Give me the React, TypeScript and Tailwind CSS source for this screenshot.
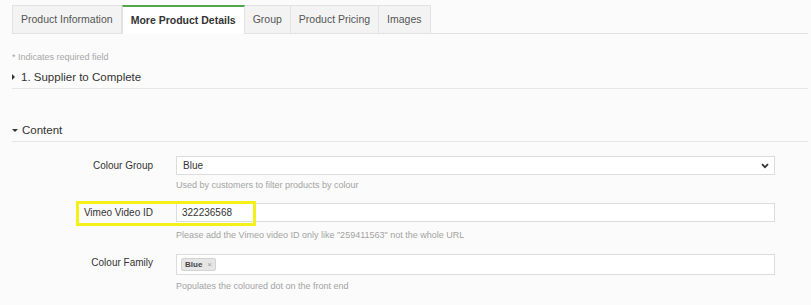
import { ReactNode } from 'react';

const tabs = ['Product Information', 'More Product Details', 'Group', 'Product Pricing', 'Images'];

function Field({ label, children, help, labelClass = '' }: { label: string; children: ReactNode; help: string; labelClass?: string }) {
  return (
    <div className="flex">
      <div className={`w-[141px] shrink-0 text-right text-[10px] text-[#333] ${labelClass}`}>{label}</div>
      <div className="ml-[23px] w-[599px]">
        {children}
        <p className="text-[9px] leading-[11px] text-[#a3a3a3]">{help}</p>
      </div>
    </div>
  );
}

export default function App() {
  return (
    <div className="min-h-screen bg-[#fbfbfb] pt-[5px] pl-3 pr-[3px] font-['Liberation_Sans',Arial,sans-serif]">
      {/* tab strip */}
      <div className="flex h-[29px] border-b border-[#e2e2e2]">
        {tabs.map((t, i) =>
          i === 1 ? (
            <div key={t} className="-mb-px flex items-center border-x border-t-2 border-x-[#e2e2e2] border-t-[#4fa64f] bg-white px-2 text-[10.5px] font-bold text-[#333]">
              {t}
            </div>
          ) : (
            <div key={t} className="flex items-center border-r border-t border-[#e2e2e2] bg-[#f3f3f3] px-2 text-[10.5px] text-[#555] first:border-l">
              {t}
            </div>
          )
        )}
      </div>

      <p className="mt-[18px] text-[9px] leading-[11px] text-[#a8a8a8]">* Indicates required field</p>

      <div className="mt-[7px] flex items-center border-b border-[#e6e6e6] pb-1 text-[11.5px] leading-[14px] text-[#333]">
        <span className="mr-[6px] inline-block h-0 w-0 border-y-[3px] border-l-[3px] border-y-transparent border-l-[#333]" />
        <span>1. Supplier to Complete</span>
      </div>

      <div className="mt-[34px] flex items-center border-b border-[#e6e6e6] pb-1 text-[11.5px] leading-[14px] text-[#333]">
        <span className="mr-[4px] inline-block h-0 w-0 border-x-[3px] border-t-[3px] border-x-transparent border-t-[#333]" />
        <span>Content</span>
      </div>

      <div className="mt-[14px]">
        <Field label="Colour Group" help="Used by customers to filter products by colour" labelClass="leading-[19px]">
          <div className="mb-[5px] flex h-[19px] items-center justify-between border border-[#dcdcdc] bg-white pl-[6px] pr-[5px] text-[10px] text-[#333]">
            <span>Blue</span>
            <svg width="8" height="6" viewBox="0 0 8 6" fill="none">
              <path d="M1 1.2 4 4.2 7 1.2" stroke="#333" strokeWidth="1.8" />
            </svg>
          </div>
        </Field>
      </div>

      <div className="relative mt-[12px]">
        <Field label="Vimeo Video ID" help={'Please add the Vimeo video ID only like "259411563" not the whole URL'} labelClass="leading-[19px]">
          <div className="mb-[8px] flex h-[19px] items-center border border-[#dcdcdc] bg-white pl-[5px] text-[10px] text-[#333]">
            322236568
          </div>
        </Field>
        <div className="pointer-events-none absolute left-[64px] top-[-2px] h-[25px] w-[180px] border-[3px] border-[#f4f01a]" />
      </div>

      <div className="mt-[13px]">
        <Field label="Colour Family" help="Populates the coloured dot on the front end" labelClass="leading-[17px]">
          <div className="mb-[6px] flex h-[21px] items-center border border-[#dcdcdc] bg-white pl-[4px]">
            <span className="flex h-[13px] items-center gap-[5px] rounded-[2px] border border-[#d4d4d4] bg-[#e6e6e6] px-[3px] text-[8px] font-bold text-[#444]">
              Blue
              <span className="text-[8px] font-normal text-[#999]">×</span>
            </span>
          </div>
        </Field>
      </div>
    </div>
  );
}
